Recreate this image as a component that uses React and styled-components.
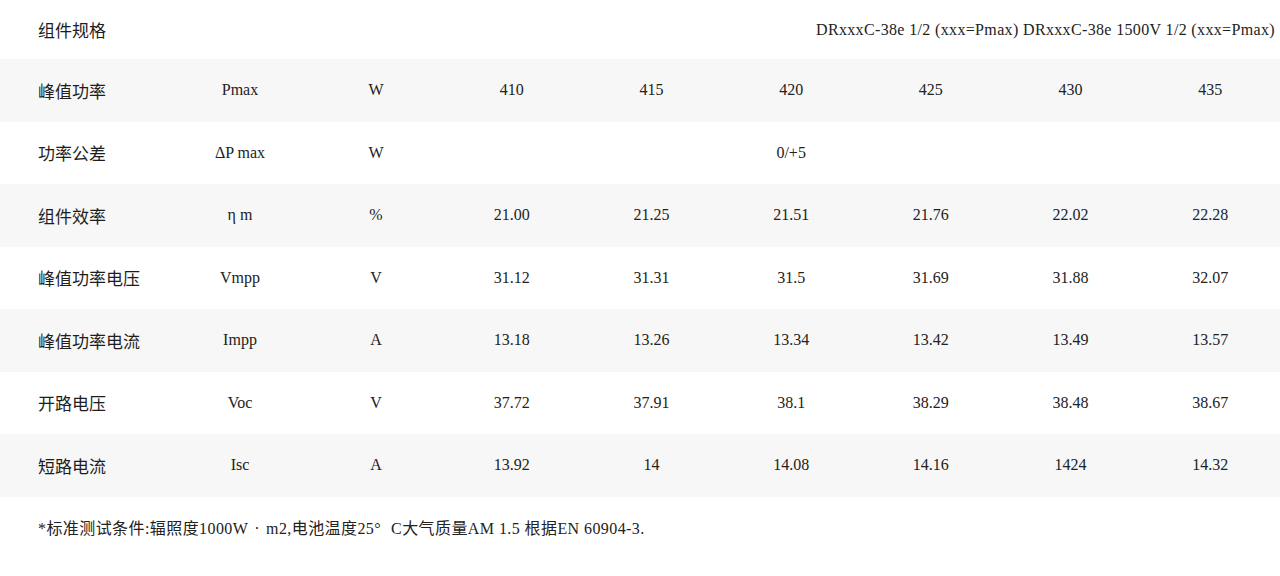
import React from "react";
import styled, { createGlobalStyle } from "styled-components";

const Global = createGlobalStyle`
  html, body { margin: 0; padding: 0; background: #fff; }
  body {
    font-family: "Liberation Serif", "Noto Sans CJK SC", serif;
    color: #222;
    font-size: 16px;
  }
`;

const Page = styled.div`
  width: 1280px;
`;

const Table = styled.div`
  display: grid;
  grid-template-columns: 170px 140px 132px repeat(6, 1fr);
`;

const Row = styled.div`
  display: contents;
`;

const Cell = styled.div`
  height: ${(p) => (p.$head ? "59px" : "62.5px")};
  display: flex;
  align-items: center;
  justify-content: ${(p) => (p.$align === "left" ? "flex-start" : p.$align === "right" ? "flex-end" : "center")};
  padding: ${(p) => (p.$align === "left" ? "0 0 0 38px" : p.$align === "right" ? "0 5px 0 0" : "0")};
  background: ${(p) => (p.$shade ? "#f7f7f7" : "#fff")};
  grid-column: ${(p) => (p.$span ? `span ${p.$span}` : "auto")};
  white-space: nowrap;
  font-size: 16px;
  line-height: 1;
  letter-spacing: ${(p) => (p.$wide ? "0.35px" : "0")};
`;

const Label = styled.span`
  font-family: "Noto Sans CJK SC", sans-serif;
  font-size: 17px;
  font-weight: 400;
  color: #1e1e1e;
`;

const Footer = styled.p`
  margin: 0;
  padding: 22px 0 0 38px;
  font-size: 16px;
  line-height: 20px;
  letter-spacing: 0.42px;
  font-family: "Liberation Serif", "Noto Sans CJK SC", serif;
`;

const Gap = styled.span`
  padding-left: ${(p) => p.$l || 0}px;
  padding-right: ${(p) => p.$r || 0}px;
`;

const rows = [
  { label: "峰值功率", sym: "Pmax", unit: "W", vals: ["410", "415", "420", "425", "430", "435"] },
  { label: "功率公差", sym: "ΔP max", unit: "W", vals: ["", "", "0/+5", "", "", ""] },
  { label: "组件效率", sym: "η m", unit: "%", vals: ["21.00", "21.25", "21.51", "21.76", "22.02", "22.28"] },
  { label: "峰值功率电压", sym: "Vmpp", unit: "V", vals: ["31.12", "31.31", "31.5", "31.69", "31.88", "32.07"] },
  { label: "峰值功率电流", sym: "Impp", unit: "A", vals: ["13.18", "13.26", "13.34", "13.42", "13.49", "13.57"] },
  { label: "开路电压", sym: "Voc", unit: "V", vals: ["37.72", "37.91", "38.1", "38.29", "38.48", "38.67"] },
  { label: "短路电流", sym: "Isc", unit: "A", vals: ["13.92", "14", "14.08", "14.16", "1424", "14.32"] },
];

export default function App() {
  return (
    <Page>
      <Global />
      <Table>
        <Row>
          <Cell $head $align="left">
            <Label>组件规格</Label>
          </Cell>
          <Cell $head />
          <Cell $head />
          <Cell $head $span={6} $align="right" $wide>
            DRxxxC-38e 1/2 (xxx=Pmax) DRxxxC-38e 1500V 1/2 (xxx=Pmax)
          </Cell>
        </Row>
        {rows.map((r, i) => {
          const shade = i % 2 === 0;
          return (
            <Row key={r.label}>
              <Cell $shade={shade} $align="left">
                <Label>{r.label}</Label>
              </Cell>
              <Cell $shade={shade}>{r.sym}</Cell>
              <Cell $shade={shade}>{r.unit}</Cell>
              {r.vals.map((v, j) => (
                <Cell key={j} $shade={shade}>
                  {v}
                </Cell>
              ))}
            </Row>
          );
        })}
      </Table>
      <Footer>
        *标准测试条件:辐照度1000W<Gap $l={6} $r={6}>·</Gap>m2,电池温度25<Gap $r={10}>°</Gap>C大气质量AM 1.5 根据EN 60904-3.
      </Footer>
    </Page>
  );
}
